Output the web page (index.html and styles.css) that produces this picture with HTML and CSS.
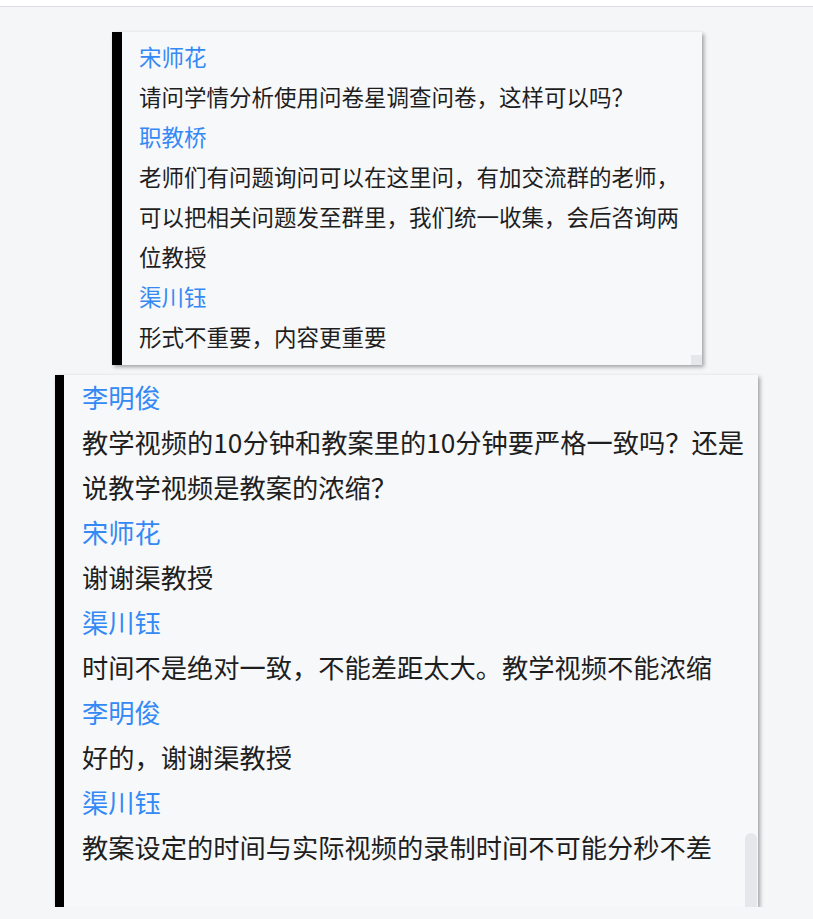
FILE: index.html
```html
<!DOCTYPE html>
<html lang="zh-CN">
<head>
    <meta charset="UTF-8">
    <meta name="viewport" content="width=device-width, initial-scale=1.0">
    <title>互动问答</title>
    <link rel="stylesheet" href="styles.css">
</head>
<body>
    <div class="top-bar"></div>

    <div class="board">
        <div class="chat-box chat-small">
            <div class="msg">
                <div class="name">宋师花</div>
                <div class="text">请问学情分析使用问卷星调查问卷，这样可以吗？</div>
            </div>
            <div class="msg">
                <div class="name">职教桥</div>
                <div class="text">老师们有问题询问可以在这里问，有加交流群的老师，可以把相关问题发至群里，我们统一收集，会后咨询两位教授</div>
            </div>
            <div class="msg">
                <div class="name">渠川钰</div>
                <div class="text">形式不重要，内容更重要</div>
            </div>
            <div class="thumb thumb-small"></div>
        </div>

        <div class="chat-box chat-large">
            <div class="msg">
                <div class="name">李明俊</div>
                <div class="text">教学视频的10分钟和教案里的10分钟要严格一致吗？还是说教学视频是教案的浓缩？</div>
            </div>
            <div class="msg">
                <div class="name">宋师花</div>
                <div class="text">谢谢渠教授</div>
            </div>
            <div class="msg">
                <div class="name">渠川钰</div>
                <div class="text">时间不是绝对一致，不能差距太大。教学视频不能浓缩</div>
            </div>
            <div class="msg">
                <div class="name">李明俊</div>
                <div class="text">好的，谢谢渠教授</div>
            </div>
            <div class="msg">
                <div class="name">渠川钰</div>
                <div class="text">教案设定的时间与实际视频的录制时间不可能分秒不差</div>
            </div>
            <div class="thumb thumb-large"></div>
        </div>
    </div>
</body>
</html>
```

FILE: styles.css
```css
body {
    margin: 0;
    background-color: #f5f6f8;
    font-family: "Noto Sans CJK SC", "Microsoft YaHei", sans-serif;
    color: #1e1e1e;
}

.top-bar {
    height: 6px;
    background-color: #fff;
    border-bottom: 1px solid #dcdde1;
}

.board {
    display: flex;
    flex-direction: column;
    align-items: center;
    gap: 10px;
    padding-top: 25px;
}

.chat-box {
    position: relative;
    box-sizing: border-box;
    background-color: #f7f8fa;
    border-left: 10px solid #000;
    box-shadow: 2px 2px 4px rgba(0, 0, 0, 0.35);
}

.chat-small {
    width: 590px;
    height: 333px;
    margin-left: 1px;
    padding: 4px 13px 0 17px;
    font-size: 22.5px;
    line-height: 40px;
}

.chat-large {
    width: 703px;
    height: 532px;
    border-left-width: 9px;
    padding: 0 6px 0 18px;
    font-size: 26.25px;
    line-height: 45px;
}

.name {
    color: #3589f5;
}

.thumb {
    position: absolute;
    right: 0;
    bottom: 0;
    background-color: #e6e7eb;
}

.thumb-small {
    width: 11px;
    height: 10px;
}

.thumb-large {
    width: 12px;
    height: 74px;
    right: 1px;
    border-radius: 6px 6px 0 0;
}
```
